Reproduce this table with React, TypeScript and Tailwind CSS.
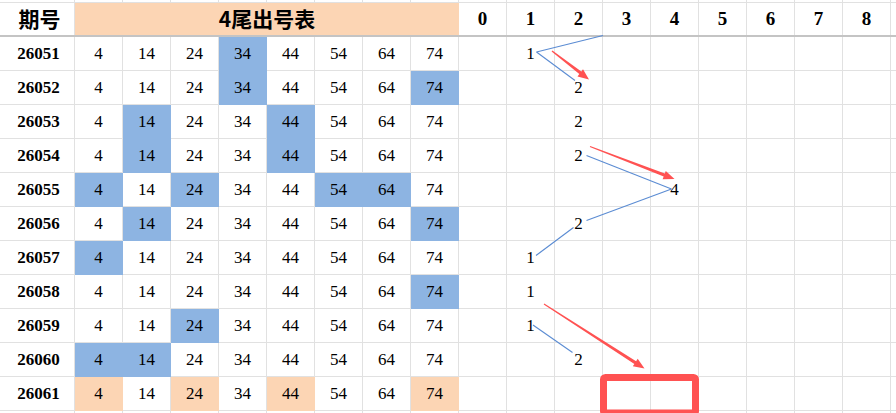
import React from 'react';

const tails = [4, 14, 24, 34, 44, 54, 64, 74];
const digits = [0, 1, 2, 3, 4, 5, 6, 7, 8];

const rows = [
  { id: '26051', hits: [3], digit: 1 },
  { id: '26052', hits: [3, 7], digit: 2 },
  { id: '26053', hits: [1, 4], digit: 2 },
  { id: '26054', hits: [1, 4], digit: 2 },
  { id: '26055', hits: [0, 2, 5, 6], digit: 4 },
  { id: '26056', hits: [1, 7], digit: 2 },
  { id: '26057', hits: [0], digit: 1 },
  { id: '26058', hits: [7], digit: 1 },
  { id: '26059', hits: [2], digit: 1 },
  { id: '26060', hits: [0, 1], digit: 2 },
  { id: '26061', hits: [0, 2, 4, 7], digit: -1, next: true },
];

const serif = { fontFamily: '"Liberation Serif", "Times New Roman", serif' };
const cjk = { fontFamily: '"Noto Sans CJK SC", "Noto Sans", sans-serif' };

// tapered red arrow: thin tail, thick shaft near the head, filled triangle head
function arrow(x1: number, y1: number, x2: number, y2: number) {
  const dx = x2 - x1;
  const dy = y2 - y1;
  const len = Math.hypot(dx, dy);
  const ux = dx / len;
  const uy = dy / len;
  const nx = -uy;
  const ny = ux;
  const head = 11;
  const bx = x2 - ux * head;
  const by = y2 - uy * head;
  const w0 = 0.6;
  const w1 = 1.6;
  const hw = 4.5;
  const pts = [
    [x1 + nx * w0, y1 + ny * w0],
    [bx + nx * w1, by + ny * w1],
    [bx + nx * hw, by + ny * hw],
    [x2, y2],
    [bx - nx * hw, by - ny * hw],
    [bx - nx * w1, by - ny * w1],
    [x1 - nx * w0, y1 - ny * w0],
  ];
  return pts.map((p) => p.map((v) => v.toFixed(1)).join(',')).join(' ');
}

const blueLines = [
  [536.5, 52, 603, 35.5],
  [536.5, 52, 575, 80.5],
  [586.5, 155.5, 671.5, 189],
  [671.5, 189, 586.5, 220.5],
  [573.5, 227.5, 536, 255.5],
  [533, 325, 572.5, 352.5],
];

const redArrows = [
  [552, 51, 589, 79.5],
  [590, 146.5, 674.5, 179],
  [544, 304, 644.5, 368.5],
];

function GridStrip() {
  return (
    <div className="flex h-[3px] border-b border-[#e1e1e1]">
      <div className="w-[75px] shrink-0 border-r border-[#e1e1e1]" />
      {tails.map((t) => (
        <div key={t} className="w-[48px] shrink-0 border-r border-[#e1e1e1]" />
      ))}
      {digits.map((d) => (
        <div key={d} className="w-[48px] shrink-0 border-r border-[#e1e1e1]" />
      ))}
      <div className="flex-1" />
    </div>
  );
}

export default function App() {
  return (
    <div className="relative w-[896px] h-[413px] overflow-hidden bg-white text-black">
      <GridStrip />

      {/* header */}
      <div className="flex h-[34px] border-b-2 border-[#c4c4c4]">
        <div
          className="w-[75px] shrink-0 flex items-center justify-center pl-[5px] text-[21px] font-bold border-r border-[#e1e1e1]"
          style={cjk}
        >
          期号
        </div>
        <div
          className="w-[384px] shrink-0 flex items-center justify-center bg-[#fcd5b4] text-[21px] font-bold"
          style={cjk}
        >
          4尾出号表
        </div>
        {digits.map((d) => (
          <div
            key={d}
            className="w-[48px] shrink-0 flex items-center justify-center text-[19px] font-bold border-r border-[#e1e1e1]"
            style={serif}
          >
            {d}
          </div>
        ))}
        <div className="flex-1" />
      </div>

      {rows.map((r) => (
        <div key={r.id} className="flex h-[34px]">
          <div
            className="w-[75px] shrink-0 flex items-center justify-center pl-[3px] text-[17px] font-bold border-r border-b border-[#e1e1e1]"
            style={serif}
          >
            {r.id}
          </div>
          {tails.map((t, i) => {
            const on = r.hits.includes(i);
            const fill = !on
              ? 'border-[#e1e1e1]'
              : r.next
              ? 'bg-[#fcd5b4] border-[#fcd5b4]'
              : 'bg-[#8db4e2] border-[#8db4e2]';
            return (
              <div
                key={t}
                className={`w-[48px] shrink-0 flex items-center justify-center text-[17px] border-r border-b ${fill}`}
                style={serif}
              >
                {t}
              </div>
            );
          })}
          {digits.map((d) => (
            <div
              key={d}
              className="w-[48px] shrink-0 flex items-center justify-center text-[17px] border-r border-b border-[#e1e1e1]"
              style={serif}
            >
              {r.digit === d ? d : ''}
            </div>
          ))}
          <div className="flex-1 border-b border-[#e1e1e1]" />
        </div>
      ))}

      <GridStrip />

      <svg className="absolute left-0 top-0 pointer-events-none" width={896} height={413}>
        {blueLines.map(([a, b, c, d], i) => (
          <line key={i} x1={a} y1={b} x2={c} y2={d} stroke="#5b8cd3" strokeWidth={1.1} />
        ))}
        {redArrows.map(([a, b, c, d], i) => (
          <polygon key={i} points={arrow(a, b, c, d)} fill="#ff5252" />
        ))}
        <rect x={603.5} y={377.5} width={92} height={35.5} rx={2} fill="none" stroke="#ff5252" strokeWidth={7} />
      </svg>
    </div>
  );
}
